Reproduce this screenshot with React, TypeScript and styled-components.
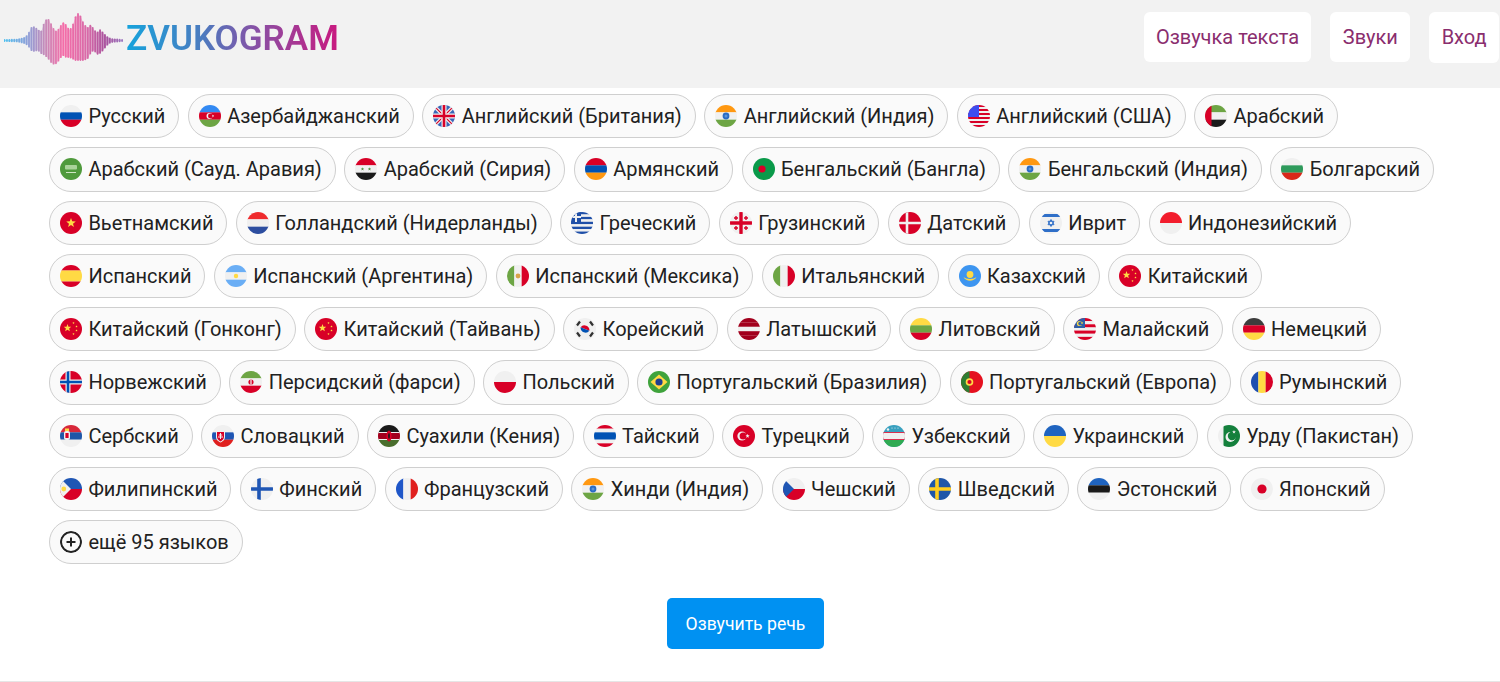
import React from "react";
import styled, { createGlobalStyle } from "styled-components";

const Global = createGlobalStyle`
  html, body { margin: 0; padding: 0; background: #fff; }
  body { font-family: Roboto, "Liberation Sans", sans-serif; }
`;

const Page = styled.div`
  display: flex;
  flex-direction: column;
  min-height: 682px;
  box-sizing: border-box;
  border-bottom: 1px solid #e6e6e6;
`;
const Header = styled.header`
  height: 88px;
  background: #f2f2f2;
  display: flex;
  align-items: flex-start;
  justify-content: space-between;
  padding-right: 1px;
`;
const Logo = styled.a`
  display: flex;
  align-items: center;
  height: 76px;
  padding-left: 4px;
  gap: 3px;
`;
const LogoText = styled.span`
  font-size: 35px;
  font-weight: 600;
  line-height: 1;
  background: linear-gradient(90deg, #16a3dc 0%, #4a7cc0 35%, #8a4fa4 62%, #c9197f 100%);
  -webkit-background-clip: text;
  background-clip: text;
  color: transparent;
`;
const Nav = styled.nav`
  display: flex;
  gap: 19px;
  padding-top: 12px;
`;
const NavLink = styled.a<{ $dotted?: boolean }>`
  display: flex;
  align-items: center;
  box-sizing: border-box;
  height: ${(p) => (p.$dotted ? 51 : 50)}px;
  padding: 0 12.4px;
  background: #fff;
  border-radius: 6px;
  color: #8a2d6e;
  font-size: 20px;
  padding-bottom: ${(p) => (p.$dotted ? 1 : 0)}px;
`;
const Main = styled.main`
  flex: 1;
  padding: 6px 49px 0;
  display: flex;
  flex-direction: column;
`;
const Chips = styled.div`
  display: flex;
  flex-wrap: wrap;
  gap: 9px 8.5px;
`;
const Chip = styled.a`
  display: inline-flex;
  align-items: center;
  gap: 6.4px;
  box-sizing: border-box;
  height: 44.25px;
  padding: 0 12.95px 0 10px;
  background: #fafafa;
  border: 1px solid #cfcfcf;
  border-radius: 22px;
  color: #212121;
  font-size: 20px;
  white-space: nowrap;
`;
const FlagSvg = styled.svg`
  width: 22px;
  height: 22px;
  border-radius: 50%;
  flex-shrink: 0;
  display: block;
`;
const Submit = styled.button`
  align-self: center;
  margin: 34px 9px 0 0;
  width: 157px;
  height: 51px;
  border: 0;
  border-radius: 5px;
  background: #0091f2;
  color: #fff;
  font-family: inherit;
  font-size: 17.6px;
`;

const W = "#f0f0f0", R = "#d80027", B = "#0052b4", G = "#6da544", Y = "#ffda44", K = "#1a1a1a";

const Bg = ({ c }: { c: string }) => <rect width="22" height="22" fill={c} />;
const HS = ({ cs }: { cs: string[] }) => (
  <>
    {cs.map((c, i) => (
      <rect key={i} y={(22 / cs.length) * i} width="22" height={22 / cs.length + 0.1} fill={c} />
    ))}
  </>
);
const VS = ({ cs }: { cs: string[] }) => (
  <>
    {cs.map((c, i) => (
      <rect key={i} x={(22 / cs.length) * i} width={22 / cs.length + 0.1} height="22" fill={c} />
    ))}
  </>
);
const Star = ({ x, y, r, c }: { x: number; y: number; r: number; c: string }) => {
  const pts: string[] = [];
  for (let i = 0; i < 10; i++) {
    const a = -Math.PI / 2 + (i * Math.PI) / 5;
    const d = i % 2 ? r * 0.42 : r;
    pts.push(`${x + d * Math.cos(a)},${y + d * Math.sin(a)}`);
  }
  return <polygon points={pts.join(" ")} fill={c} />;
};
const Cn = () => (
  <>
    <Bg c={R} />
    <Star x={7.5} y={10} r={4} c={Y} />
    <Star x={13.5} y={5} r={1.2} c={Y} />
    <Star x={16.5} y={8.5} r={1.2} c={Y} />
    <Star x={16.5} y={12.5} r={1.2} c={Y} />
    <Star x={13.5} y={16} r={1.2} c={Y} />
  </>
);
const In = () => (
  <>
    <HS cs={["#ff9811", W, "#6da544"]} />
    <circle cx="11" cy="11" r="3.4" fill="#2a6cc4" />
    <circle cx="11" cy="11" r="1.5" fill="#5b93d8" />
  </>
);

const flags: Record<string, React.ReactNode> = {
  ru: <HS cs={[W, B, R]} />,
  az: (
    <>
      <HS cs={["#338af3", R, G]} />
      <circle cx="10.5" cy="11" r="3" fill={W} />
      <circle cx="11.4" cy="11" r="2.4" fill={R} />
      <Star x={14} y={11} r={1.3} c={W} />
    </>
  ),
  gb: (
    <>
      <Bg c="#3a66b8" />
      <path d="M0 0L22 22M22 0L0 22" stroke={W} strokeWidth="3.6" />
      <path d="M0 0L22 22M22 0L0 22" stroke={R} strokeWidth="1.2" />
      <path d="M11 0V22M0 11H22" stroke={W} strokeWidth="5" />
      <path d="M11 0V22M0 11H22" stroke={R} strokeWidth="2.6" />
    </>
  ),
  in: <In />,
  us: (
    <>
      <HS cs={[R, W, R, W, R, W, R, W, R, W, R]} />
      <rect width="11" height="12" fill="#3d4df0" />
    </>
  ),
  ae: (
    <>
      <HS cs={["#6da544", W, K]} />
      <rect width="6.5" height="22" fill={R} />
    </>
  ),
  sa: (
    <>
      <Bg c="#4f9a3c" />
      <rect x="5" y="7" width="12" height="4.5" rx="1" fill="#a9d39a" />
      <rect x="6" y="14" width="10" height="1" fill="#cfe6c4" />
    </>
  ),
  sy: (
    <>
      <HS cs={[R, W, K]} />
      <Star x={7.5} y={11} r={1.8} c="#4c8a3b" />
      <Star x={14.5} y={11} r={1.8} c="#4c8a3b" />
    </>
  ),
  am: <HS cs={[R, B, "#ff9811"]} />,
  bd: (
    <>
      <Bg c="#0a9a4a" />
      <circle cx="9" cy="11" r="3.6" fill={R} />
    </>
  ),
  bg: <HS cs={[W, "#2e9a5b", "#d8281a"]} />,
  vn: (
    <>
      <Bg c={R} />
      <Star x={11} y={11} r={5} c={Y} />
    </>
  ),
  nl: <HS cs={["#ef2b2d", W, "#2d4ea0"]} />,
  gr: (
    <>
      <HS cs={["#1f4fa8", W, "#1f4fa8", W, "#1f4fa8", W, "#1f4fa8", W, "#1f4fa8"]} />
      <rect width="10" height="10" fill="#1f4fa8" />
      <path d="M5 0V10M0 5H10" stroke={W} strokeWidth="2" />
    </>
  ),
  ge: (
    <>
      <Bg c={W} />
      <path d="M11 0V22M0 11H22" stroke={R} strokeWidth="3.4" />
      <path d="M6 4V8M4 6H8M16 4V8M14 6H18M6 14V18M4 16H8M16 14V18M14 16H18" stroke={R} strokeWidth="1.4" />
    </>
  ),
  dk: (
    <>
      <Bg c={R} />
      <path d="M8 0V22M0 11H22" stroke={W} strokeWidth="2.6" />
    </>
  ),
  il: (
    <>
      <Bg c={W} />
      <rect y="2" width="22" height="3" fill="#2f6fc8" />
      <rect y="17" width="22" height="3" fill="#2f6fc8" />
      <path d="M11 7.5L14 12.7H8ZM11 14.5L8 9.3H14Z" fill="none" stroke="#2f6fc8" strokeWidth="1" />
    </>
  ),
  id: <HS cs={["#f21c2c", W]} />,
  es: <HS cs={[R, Y, Y, R]} />,
  ar: (
    <>
      <HS cs={["#6aaef5", W, "#6aaef5"]} />
      <circle cx="11" cy="11" r="2.2" fill={Y} />
    </>
  ),
  mx: (
    <>
      <VS cs={["#6da544", W, R]} />
      <circle cx="11" cy="11" r="2.4" fill="#d8a24a" />
    </>
  ),
  it: <VS cs={["#6da544", W, R]} />,
  kz: (
    <>
      <Bg c="#3d95f0" />
      <circle cx="11" cy="9.5" r="3.4" fill={Y} />
      <path d="M4.5 12C7 17 15 17 17.5 12C15 14.5 7 14.5 4.5 12Z" fill={Y} />
    </>
  ),
  cn: <Cn />,
  kr: (
    <>
      <Bg c={W} />
      <path d="M6.6 9.2A5 5 0 0 1 15.4 12.8Z" fill={R} />
      <path d="M6.6 9.2A5 5 0 0 0 15.4 12.8Z" fill={B} />
      <path d="M3 7.5L6 3.5M16 3.5L19 7.5M3 14.5L6 18.5M16 18.5L19 14.5" stroke="#333" strokeWidth="2.2" />
    </>
  ),
  lv: <HS cs={["#a2001d", "#a2001d", W, "#a2001d", "#a2001d"]} />,
  lt: <HS cs={["#ffda44", "#6da544", "#d80027"]} />,
  my: (
    <>
      <HS cs={[R, W, R, W, R, W, R]} />
      <rect width="11" height="10" fill="#2f5fa8" />
      <circle cx="5.5" cy="5.5" r="2.6" fill={Y} />
      <circle cx="6.4" cy="5.5" r="2.1" fill="#2f5fa8" />
      <Star x={8} y={5} r={1.4} c={Y} />
    </>
  ),
  de: <HS cs={["#3d3d3d", "#d80027", "#ffda44"]} />,
  no: (
    <>
      <Bg c={R} />
      <path d="M8 0V22M0 11H22" stroke={W} strokeWidth="5" />
      <path d="M8 0V22M0 11H22" stroke={B} strokeWidth="2.6" />
    </>
  ),
  ir: (
    <>
      <HS cs={["#6da544", W, R]} />
      <circle cx="11" cy="11" r="2.6" fill={R} />
      <rect x="10.4" y="8.5" width="1.2" height="5" fill={W} />
    </>
  ),
  pl: <HS cs={[W, R]} />,
  br: (
    <>
      <Bg c="#3fa33c" />
      <polygon points="11,3.5 19.5,11 11,18.5 2.5,11" fill={Y} />
      <circle cx="11" cy="11" r="3.6" fill="#1f3f8f" />
    </>
  ),
  pt: (
    <>
      <Bg c="#e5101f" />
      <rect width="8.5" height="22" fill="#2e7d32" />
      <circle cx="8.5" cy="11" r="3.8" fill={Y} />
      <circle cx="8.5" cy="11" r="2.1" fill={R} />
    </>
  ),
  ro: <VS cs={["#1f4fb0", "#ffda44", "#d80027"]} />,
  rs: (
    <>
      <HS cs={["#d8283a", "#1f56a8", W]} />
      <rect x="4" y="6" width="6" height="9" rx="2" fill={W} />
      <rect x="5.4" y="8" width="3.2" height="5" fill={R} />
      <rect x="5" y="3.5" width="4" height="2.5" fill={Y} />
    </>
  ),
  sk: (
    <>
      <HS cs={[W, "#1f56b4", "#e0201f"]} />
      <path d="M4 6H13V12C13 15 10 17 8.5 17.5C7 17 4 15 4 12Z" fill={W} />
      <path d="M5 7H12V12C12 14 10 15.8 8.5 16.4C7 15.8 5 14 5 12Z" fill={R} />
      <path d="M8.5 8V14M6.8 10H10.2M6 12H11" stroke={W} strokeWidth="1" />
    </>
  ),
  ke: (
    <>
      <HS cs={[K, "#a2001d", "#496e2d"]} />
      <rect y="7" width="22" height="1" fill={W} />
      <rect y="14" width="22" height="1" fill={W} />
      <ellipse cx="11" cy="11" rx="2.6" ry="5.5" fill={R} />
      <ellipse cx="11" cy="11" rx="0.9" ry="3" fill={K} />
    </>
  ),
  th: <HS cs={[R, W, B, B, W, R]} />,
  tr: (
    <>
      <Bg c={R} />
      <circle cx="9" cy="11" r="4.6" fill={W} />
      <circle cx="10.2" cy="11" r="3.6" fill={R} />
      <Star x={14.6} y={11} r={2.2} c={W} />
    </>
  ),
  uz: (
    <>
      <Bg c="#38a0bf" />
      <rect y="7" width="22" height="8" fill={R} />
      <rect y="7.8" width="22" height="6.4" fill={W} />
      <rect y="15" width="22" height="7" fill="#2faa52" />
      <circle cx="5" cy="4.5" r="1.2" fill={W} />
      <circle cx="9" cy="3" r="0.6" fill={W} />
      <circle cx="12" cy="3" r="0.6" fill={W} />
      <circle cx="15" cy="3" r="0.6" fill={W} />
    </>
  ),
  ua: <HS cs={["#1f64c0", "#ffda44"]} />,
  pk: (
    <>
      <Bg c={W} />
      <rect x="5.5" width="16.5" height="22" fill="#14803c" />
      <circle cx="12.5" cy="12" r="5" fill={W} />
      <circle cx="14" cy="11" r="4.2" fill="#14803c" />
      <Star x={16} y={7} r={2} c={W} />
    </>
  ),
  ph: (
    <>
      <HS cs={["#1f56b4", "#d80027"]} />
      <polygon points="0,0 11,11 0,22" fill={W} />
      <circle cx="3.8" cy="11" r="2.4" fill={Y} />
    </>
  ),
  fi: (
    <>
      <Bg c={W} />
      <path d="M8 0V22M0 11H22" stroke="#1f56b4" strokeWidth="3.6" />
    </>
  ),
  fr: <VS cs={["#1f56c8", W, "#e0201f"]} />,
  cz: (
    <>
      <HS cs={[W, "#d80027"]} />
      <polygon points="0,0 11,11 0,22" fill="#1f56b4" />
    </>
  ),
  se: (
    <>
      <Bg c="#1f56a8" />
      <path d="M8 0V22M0 11H22" stroke="#ffcd1f" strokeWidth="3.6" />
    </>
  ),
  ee: <HS cs={["#1f64c0", K, W]} />,
  jp: (
    <>
      <Bg c={W} />
      <circle cx="11" cy="11" r="4.6" fill={R} />
    </>
  ),
  plus: (
    <>
      <Bg c="#fafafa" />
      <circle cx="11" cy="11" r="10" fill="none" stroke="#222" strokeWidth="2" />
      <path d="M11 6.5V15.5M6.5 11H15.5" stroke="#222" strokeWidth="2" />
    </>
  ),
};

const languages: [string, string][] = [
  ["ru", "Русский"], ["az", "Азербайджанский"], ["gb", "Английский (Британия)"], ["in", "Английский (Индия)"],
  ["us", "Английский (США)"], ["ae", "Арабский"], ["sa", "Арабский (Сауд. Аравия)"], ["sy", "Арабский (Сирия)"],
  ["am", "Армянский"], ["bd", "Бенгальский (Бангла)"], ["in", "Бенгальский (Индия)"], ["bg", "Болгарский"],
  ["vn", "Вьетнамский"], ["nl", "Голландский (Нидерланды)"], ["gr", "Греческий"], ["ge", "Грузинский"],
  ["dk", "Датский"], ["il", "Иврит"], ["id", "Индонезийский"], ["es", "Испанский"], ["ar", "Испанский (Аргентина)"],
  ["mx", "Испанский (Мексика)"], ["it", "Итальянский"], ["kz", "Казахский"], ["cn", "Китайский"],
  ["cn", "Китайский (Гонконг)"], ["cn", "Китайский (Тайвань)"], ["kr", "Корейский"], ["lv", "Латышский"],
  ["lt", "Литовский"], ["my", "Малайский"], ["de", "Немецкий"], ["no", "Норвежский"], ["ir", "Персидский (фарси)"],
  ["pl", "Польский"], ["br", "Португальский (Бразилия)"], ["pt", "Португальский (Европа)"], ["ro", "Румынский"],
  ["rs", "Сербский"], ["sk", "Словацкий"], ["ke", "Суахили (Кения)"], ["th", "Тайский"], ["tr", "Турецкий"],
  ["uz", "Узбекский"], ["ua", "Украинский"], ["pk", "Урду (Пакистан)"], ["ph", "Филипинский"], ["fi", "Финский"],
  ["fr", "Французский"], ["in", "Хинди (Индия)"], ["cz", "Чешский"], ["se", "Шведский"], ["ee", "Эстонский"],
  ["jp", "Японский"], ["plus", "ещё 95 языков"],
];

// Envelope of the logo's sound wave: [x, top, bottom], in page pixels.
const envelope: [number, number, number][] = [
  [0, 40, 41], [14, 39.5, 41.5], [20, 38, 43], [24, 35, 45], [27, 28, 50], [30, 27, 51], [34, 30, 50], [37, 32, 53],
  [41, 21, 55], [44, 19, 58], [47, 24, 62], [50, 30, 64], [53, 32, 63], [56, 27, 58], [59, 23, 55], [62, 25, 57],
  [65, 30, 57], [68, 28, 58], [71, 18, 60], [74, 14, 60], [77, 17, 60], [80, 25, 60], [84, 28, 58], [87, 25, 52],
  [90, 30, 50], [93, 33, 54], [96, 30, 53], [99, 33, 50], [103, 37, 45], [107, 39, 42], [119, 40, 41],
];
const edge = (x: number, k: 1 | 2) => {
  const i = envelope.findIndex((p) => p[0] >= x);
  if (i <= 0) return envelope[0][k];
  const a = envelope[i - 1], b = envelope[i];
  return a[k] + ((b[k] - a[k]) * (x - a[0])) / (b[0] - a[0]);
};
const bars = Array.from({ length: 49 }, (_, i) => i * 2.45 + 0.5);
const outline = [
  ...envelope.map((p) => `${p[0]},${p[1]}`),
  ...[...envelope].reverse().map((p) => `${p[0]},${p[2]}`),
].join(" ");

const WaveSvg = styled.svg`
  width: 119px;
  height: 76px;
  display: block;
`;

const Wave = () => (
  <WaveSvg viewBox="0 0 119 76">
    <defs>
      <linearGradient id="wave" gradientUnits="userSpaceOnUse" x1="0" y1="0" x2="119" y2="0">
        <stop offset="0" stopColor="#4cc0f0" />
        <stop offset="0.2" stopColor="#8f9fd8" />
        <stop offset="0.35" stopColor="#c88ab8" />
        <stop offset="0.5" stopColor="#f56ca8" />
        <stop offset="0.7" stopColor="#d86aa8" />
        <stop offset="0.85" stopColor="#a8509c" />
        <stop offset="1" stopColor="#9c78c0" />
      </linearGradient>
    </defs>
    <polygon points={outline} fill="url(#wave)" opacity="0.4" />
    {bars.map((x) => (
      <line key={x} x1={x} x2={x} y1={edge(x, 1)} y2={edge(x, 2)} stroke="url(#wave)" strokeWidth="1.8" strokeLinecap="round" />
    ))}
  </WaveSvg>
);

export default function App() {
  return (
    <>
      <Global />
      <Page>
        <Header>
          <Logo>
            <Wave />
            <LogoText>ZVUKOGRAM</LogoText>
          </Logo>
          <Nav>
            <NavLink>Озвучка текста</NavLink>
            <NavLink>Звуки</NavLink>
            <NavLink $dotted>Вход</NavLink>
          </Nav>
        </Header>
        <Main>
          <Chips>
            {languages.map(([code, name]) => (
              <Chip key={name}>
                <FlagSvg viewBox="0 0 22 22">{flags[code]}</FlagSvg>
                {name}
              </Chip>
            ))}
          </Chips>
          <Submit>Озвучить речь</Submit>
        </Main>
      </Page>
    </>
  );
}
